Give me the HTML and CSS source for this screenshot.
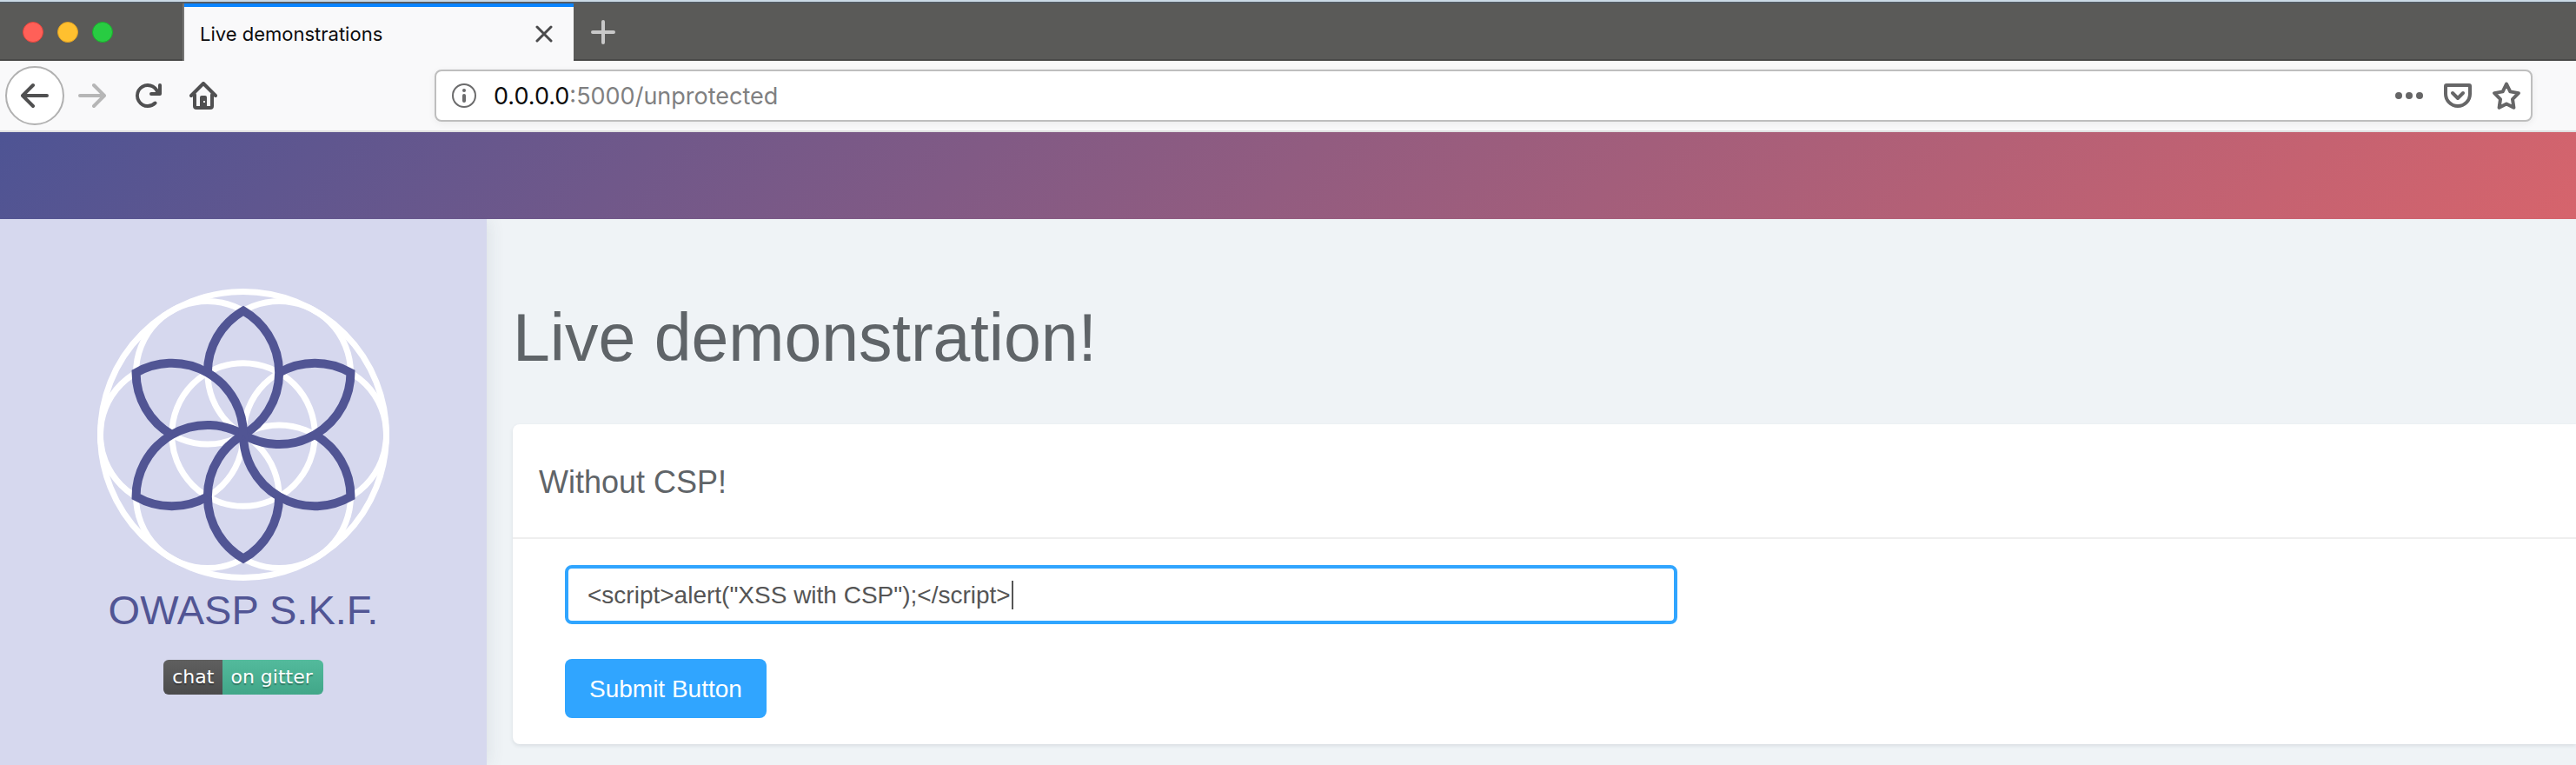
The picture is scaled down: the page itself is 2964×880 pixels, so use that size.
FILE: index.html
```html
<!DOCTYPE html>
<html lang="en">
<head>
<meta charset="utf-8">
<title>Live demonstrations</title>
<link rel="stylesheet" href="styles.css">
</head>
<body>
<div class="browser">
  <div class="tabstrip">
    <div class="lights">
      <button class="light red" aria-label="Close window"></button>
      <button class="light yellow" aria-label="Minimize window"></button>
      <button class="light green" aria-label="Zoom window"></button>
    </div>
    <div class="tab">
      <span class="tab-title">Live demonstrations</span>
      <button class="icon-btn" aria-label="Close tab">
        <svg width="20" height="20" viewBox="0 0 20 20" fill="none" stroke="#4a4a4b" stroke-width="3" stroke-linecap="round"><path d="M2 2l16 16M18 2L2 18"/></svg>
      </button>
    </div>
    <button class="icon-btn new-tab" aria-label="New tab">
      <svg width="28" height="28" viewBox="0 0 28 28" fill="none" stroke="#c8c8c8" stroke-width="4" stroke-linecap="round"><path d="M14 2v24M2 14h24"/></svg>
    </button>
  </div>
  <div class="toolbar">
    <div class="nav">
      <button class="icon-btn back" aria-label="Back">
        <svg width="32" height="32" viewBox="0 0 16 16" fill="#505051"><path d="M15 7H3.414l4.293-4.293a1 1 0 0 0-1.414-1.414l-6 6a1 1 0 0 0 0 1.414l6 6a1 1 0 0 0 1.414-1.414L3.414 9H15a1 1 0 0 0 0-2z"/></svg>
      </button>
      <button class="icon-btn" aria-label="Forward">
        <svg width="32" height="32" viewBox="0 0 16 16" fill="#b6b6b6"><path d="M1 7h11.586L8.293 2.707a1 1 0 0 1 1.414-1.414l6 6a1 1 0 0 1 0 1.414l-6 6a1 1 0 0 1-1.414-1.414L12.586 9H1a1 1 0 0 1 0-2z"/></svg>
      </button>
      <button class="icon-btn" aria-label="Reload">
        <svg width="32" height="32" viewBox="0 0 16 16" fill="#505051"><path d="M15 1a1 1 0 0 0-1 1v2.418A6.995 6.995 0 1 0 8 15a6.954 6.954 0 0 0 4.95-2.05 1 1 0 0 0-1.414-1.414A5.019 5.019 0 1 1 12.549 6H10a1 1 0 0 0 0 2h5a1 1 0 0 0 1-1V2a1 1 0 0 0-1-1z"/></svg>
      </button>
      <button class="icon-btn" aria-label="Home">
        <svg width="32" height="32" viewBox="0 0 16 16"><path d="M1 8l7-7 7 7M3 7.500V14a1 1 0 0 0 1 1h8a1 1 0 0 0 1-1V7.500" fill="none" stroke="#505051" stroke-width="2" stroke-linecap="round" stroke-linejoin="round"/><path d="M6 15V9a1 1 0 0 1 1-1h2a1 1 0 0 1 1 1v6z" fill="#505051"/><rect x="8" y="11" width="1" height="1" fill="#f9f9fa"/></svg>
      </button>
    </div>
    <div class="urlbar">
      <svg class="info" width="28" height="28" viewBox="0 0 28 28"><circle cx="14" cy="14" r="13" fill="none" stroke="#6b6b6c" stroke-width="2"/><circle cx="14" cy="8" r="2" fill="#6b6b6c"/><rect x="12" y="12" width="4" height="10" rx="2" fill="#6b6b6c"/></svg>
      <a class="url" href="#"><span class="host">0.0.0.0</span>:5000/unprotected</a>
      <div class="actions">
        <button class="icon-btn" aria-label="Page actions">
          <svg width="32" height="32" viewBox="0 0 32 32" fill="#666667"><circle cx="4" cy="16" r="4"/><circle cx="16" cy="16" r="4"/><circle cx="28" cy="16" r="4"/></svg>
        </button>
        <button class="icon-btn" aria-label="Save to Pocket">
          <svg width="32" height="32" viewBox="0 0 32 32" fill="none" stroke="#666667" stroke-width="4" stroke-linecap="round" stroke-linejoin="round"><path d="M3 4h26a1 1 0 0 1 1 1v9a14 14 0 0 1-28 0V5a1 1 0 0 1 1-1z"/><path d="M10 13l6 6 6-6"/></svg>
        </button>
        <button class="icon-btn" aria-label="Bookmark this page">
          <svg width="32" height="32" viewBox="0 0 32 32" fill="none" stroke="#666667" stroke-width="4" stroke-linejoin="round"><path d="M16 2.500l4.300 8.900 9.600 1.700-6.900 7 1.400 9.700-8.400-4.400-8.400 4.400L9 20.100l-6.900-7 9.600-1.700z"/></svg>
        </button>
      </div>
    </div>
  </div>
</div>
<header class="banner"></header>
<div class="page">
  <aside class="sidebar">
    <svg class="logo" width="336" height="336" viewBox="-168 -168 336 336" fill="none" role="img" aria-label="Flower of life logo">
      <g stroke="#fff" stroke-width="7">
        <circle r="164.500"/><circle r="82.300"/>
        <circle cx="82.300" r="82.300"/><circle cx="-82.300" r="82.300"/>
        <circle cx="41.150" cy="71.270" r="82.300"/><circle cx="-41.150" cy="71.270" r="82.300"/>
        <circle cx="41.150" cy="-71.270" r="82.300"/><circle cx="-41.150" cy="-71.270" r="82.300"/>
      </g>
      <defs><path id="petal" d="M0 0A82.300 82.300 0 0 0 0-142.540A82.300 82.300 0 0 0-41.150-71.270"/></defs>
      <g stroke="#515594" stroke-width="10">
        <use href="#petal"/><use href="#petal" transform="rotate(60)"/><use href="#petal" transform="rotate(120)"/>
        <use href="#petal" transform="rotate(180)"/><use href="#petal" transform="rotate(240)"/><use href="#petal" transform="rotate(300)"/>
      </g>
    </svg>
    <div class="brand">OWASP S.K.F.</div>
    <a class="badge" href="#"><span class="badge-left">chat</span><span class="badge-right">on gitter</span></a>
  </aside>
  <main class="main">
    <h1 class="title">Live demonstration!</h1>
    <section class="card">
      <h2 class="card-head">Without CSP!</h2>
      <form class="card-body">
        <div class="field">
          <input class="input" type="text" aria-label="Payload" value="&lt;script&gt;alert(&quot;XSS with CSP&quot;);&lt;/script&gt;">
          <span class="caret"></span>
        </div>
        <button class="submit" type="button">Submit Button</button>
      </form>
    </section>
  </main>
</div>
</body>
</html>
```
FILE: styles.css
```css
* { box-sizing: border-box; }
body {
  margin: 0;
  min-height: 100vh;
  display: flex;
  flex-direction: column;
  background: #eff3f6;
  color: #5f6468;
  font-family: "Liberation Sans", Arial, sans-serif;
}
button { font: inherit; border: 0; padding: 0; background: none; cursor: pointer; }
svg { display: block; }
a { text-decoration: none; }

.browser {
  border-top: 2px solid #cbdae6;
  background: #f9f9fa;
  font-family: Inter, Roboto, sans-serif;
}
.tabstrip {
  display: flex;
  height: 68px;
  border-top: 2px solid #555c63;
  background: #5a5a58;
  box-shadow: inset 0 -2px #484847;
}
.lights {
  display: flex;
  gap: 16px;
  width: 212px;
  padding: 21px 26px;
  border-right: 2px solid #747473;
}
.light { width: 24px; height: 24px; border-radius: 50%; }
.red { background: #ff6058; border: 1px solid #e2443c; }
.yellow { background: #ffc02f; border: 1px solid #dfa023; }
.green { background: #28cc42; border: 1px solid #1bac2c; }
.tab {
  display: flex;
  align-items: center;
  justify-content: space-between;
  width: 448px;
  padding: 0 24px 0 18px;
  border-top: 4px solid #0a84ff;
  background: #f9f9fa;
  color: #0c0c0d;
  font-size: 22px;
}
.icon-btn { display: grid; place-items: center; flex: none; }
.new-tab { padding: 0 20px; }

.toolbar {
  display: flex;
  align-items: center;
  height: 82px;
  padding: 0 50px 0 6px;
  border-bottom: 2px solid #e0e0e1;
}
.nav { display: flex; align-items: center; gap: 32px; width: 494px; }
.back {
  width: 68px;
  height: 68px;
  margin-right: -16px;
  border: 2px solid #b1b1b1;
  border-radius: 50%;
  background: #fff;
}
.urlbar {
  display: flex;
  align-items: center;
  flex: 1;
  height: 60px;
  padding: 0 12px 0 18px;
  border: 2px solid #bebebe;
  border-radius: 8px;
  background: #fff;
  box-shadow: 0 2px 8px rgba(0, 0, 0, .06);
}
.url { flex: 1; margin-left: 20px; color: #808081; font-size: 27px; }
.host { color: #0c0c0d; }
.actions { display: flex; gap: 24px; }

.banner { height: 100px; background: linear-gradient(135deg, #4e5494, #d6646c); }
.page { display: flex; flex: 1; }
.sidebar {
  display: flex;
  flex-direction: column;
  align-items: center;
  width: 560px;
  padding-top: 80px;
  background: #d6d8ee;
  box-shadow: 0 0 20px rgba(60, 70, 90, .12);
  clip-path: inset(0 -30px 0 0);
}
.brand { margin-top: 4px; color: #515594; font-size: 47px; line-height: 60px; }
.badge {
  display: flex;
  margin-top: 27px;
  border-radius: 6px;
  overflow: hidden;
  color: #fff;
  font: 22px/40px "DejaVu Sans", Verdana, sans-serif;
  text-shadow: 0 2px 1px rgba(1, 1, 1, .3);
}
.badge-left { padding: 0 10px; background: linear-gradient(#5f5f5f, #4b4b4b); }
.badge-right { padding: 0 12px 0 9px; background: linear-gradient(#53ba9c, #41a688); }

.main { flex: 1; padding-left: 30px; }
.title { margin: 87px 0 51px; font-size: 77px; line-height: 98px; font-weight: 400; }
.card {
  border-radius: 8px 0 0 8px;
  background: #fff;
  box-shadow: 0 2px 4px rgba(60, 70, 90, .12);
}
.card-head {
  margin: 0;
  padding: 47px 30px 43px;
  border-bottom: 2px solid #eee;
  font-size: 36px;
  line-height: 40px;
  font-weight: 400;
}
.card-body { padding: 30px 60px; }
.field { position: relative; width: 56.8%; }
.input {
  display: block;
  width: 100%;
  height: 68px;
  padding: 2px 22px 0;
  border: 4px solid #30a5ff;
  border-radius: 8px;
  outline: 0;
  background: #fff;
  color: #555;
  font: 28px "Liberation Sans", Arial, sans-serif;
}
.caret {
  position: absolute;
  top: 18px;
  left: 514px;
  width: 2px;
  height: 33px;
  background: #555;
}
.submit {
  margin-top: 40px;
  height: 68px;
  padding: 2px 28px 0;
  border-radius: 8px;
  background: #30a5ff;
  color: #fff;
  font-size: 28px;
}
```
